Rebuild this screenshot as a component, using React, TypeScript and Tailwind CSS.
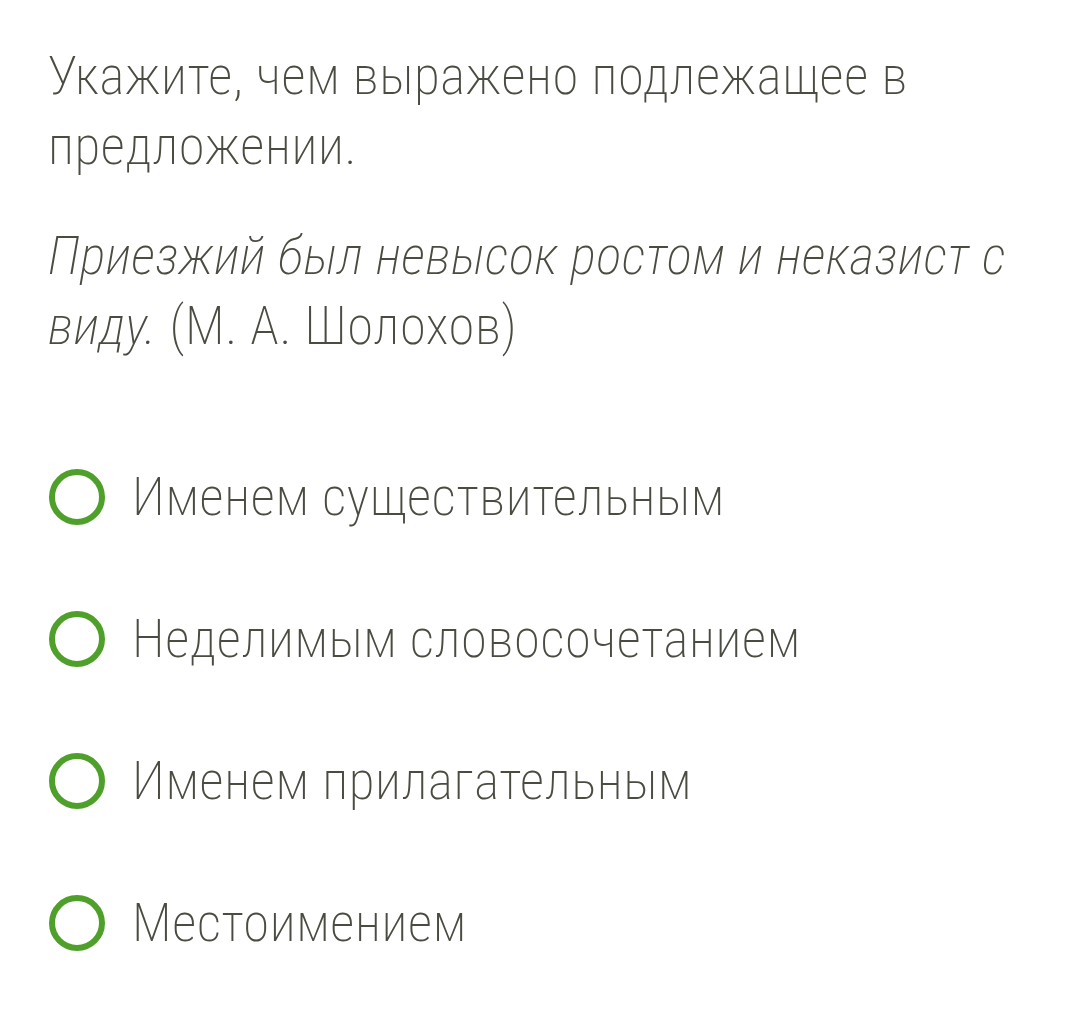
const options = [
  "Именем существительным",
  "Неделимым словосочетанием",
  "Именем прилагательным",
  "Местоимением",
];

function Radio() {
  return (
    <svg width="58" height="58" viewBox="0 0 58 58" className="shrink-0">
      <circle cx="29" cy="29" r="25" fill="none" stroke="#4ea02a" strokeWidth="6" />
    </svg>
  );
}

export default function App() {
  return (
    <div
      className="min-h-[1019px] w-[1065px] bg-white pl-[48px] pr-[30px] pt-[41px] text-[#4b4b42] font-extralight tracking-[0.65px] [font-stretch:condensed]"
      style={{ fontFamily: "Roboto, 'Liberation Sans', sans-serif" }}
    >
      <p className="text-[53px] leading-[70px]">
        Укажите, чем выражено подлежащее в предложении.
      </p>
      <p className="mt-[40px] text-[53px] leading-[70px]">
        <i>Приезжий был невысок ростом и неказист с виду.</i> (М. А. Шолохов)
      </p>
      <div className="mt-[101px] flex flex-col gap-[72px]">
        {options.map((o) => (
          <label key={o} className="flex items-center gap-[26px] text-[53px] leading-[70px]">
            <Radio />
            <span>{o}</span>
          </label>
        ))}
      </div>
    </div>
  );
}
